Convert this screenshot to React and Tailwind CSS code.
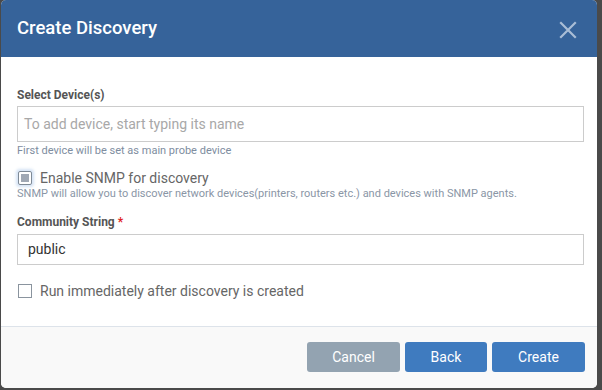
export default function App() {
  return (
    <div className="w-[602px] h-[390px] bg-[#4a4a4a] pl-px pr-[5px] pb-[2px] overflow-hidden" style={{ fontFamily: "Roboto, 'Liberation Sans', sans-serif" }}>
      <div className="h-full flex flex-col bg-white rounded-[5px] overflow-hidden">
        {/* Header */}
        <div className="h-[57px] bg-[#36639a] flex items-center justify-between pl-[16px] pr-[19px] shrink-0">
          <h1 className="text-white text-[18.5px] font-medium">Create Discovery</h1>
          <svg width="20" height="20" viewBox="0 0 20 20" className="mt-[2px]">
            <path d="M3 3 L17 17 M17 3 L3 17" stroke="#a9bdd6" strokeWidth="2.2" strokeLinecap="square" />
          </svg>
        </div>

        {/* Body */}
        <div className="flex-1 pl-[16px] pr-[13px] pt-[31px]">
          <label className="block text-[12px] font-bold text-[#555] leading-[14px]">Select Device(s)</label>
          <div className="mt-[4px] h-[36px] border border-[#cccccc] flex items-center px-[6px] text-[14px] text-[#a8a8a8]">
            To add device, start typing its name
          </div>
          <p className="mt-[2px] text-[11px] text-[#7e8da0] leading-[13px]">First device will be set as main probe device</p>

          <div className="mt-[13px] flex items-center">
            <div className="w-[14px] h-[14px] ml-[1px] rounded-[2px] shadow-[0_0_3px_2px_rgba(160,190,230,0.45)] border border-[#7f8a96] bg-white flex items-center justify-center">
              <div className="w-[8px] h-[8px] bg-[#a0a8b4]" />
            </div>
            <span className="ml-[8px] text-[14px] text-[#666] leading-[16px]">Enable SNMP for discovery</span>
          </div>
          <p className="mt-[1px] text-[11px] text-[#8a96a6] leading-[13px]">SNMP will allow you to discover network devices(printers, routers etc.) and devices with SNMP agents.</p>

          <label className="block mt-[15px] text-[12px] font-bold text-[#555] leading-[14px]">
            Community String <span className="text-[#e02020]">*</span>
          </label>
          <div className="mt-[5px] h-[31px] border border-[#cccccc] flex items-center px-[10px] text-[14px] text-[#333]">
            public
          </div>

          <div className="mt-[18px] flex items-center">
            <div className="w-[14px] h-[14px] ml-[1px] border border-[#8a949e] bg-white" />
            <span className="ml-[8px] text-[14px] text-[#666] leading-[16px]">Run immediately after discovery is created</span>
          </div>
        </div>

        {/* Footer */}
        <div className="h-[62px] shrink-0 bg-[#f9f9f9] border-t border-[#dde3ea] flex items-center justify-end gap-[5px] pr-[12px] pb-[1px]">
          <button className="w-[93px] h-[30px] rounded-[3px] bg-[#93a3b1] text-white text-[14px]">Cancel</button>
          <button className="w-[82px] h-[30px] rounded-[3px] bg-[#3f7bbf] text-white text-[14px]">Back</button>
          <button className="w-[93px] h-[30px] rounded-[3px] bg-[#3f7bbf] text-white text-[14px]">Create</button>
        </div>
      </div>
    </div>
  );
}
